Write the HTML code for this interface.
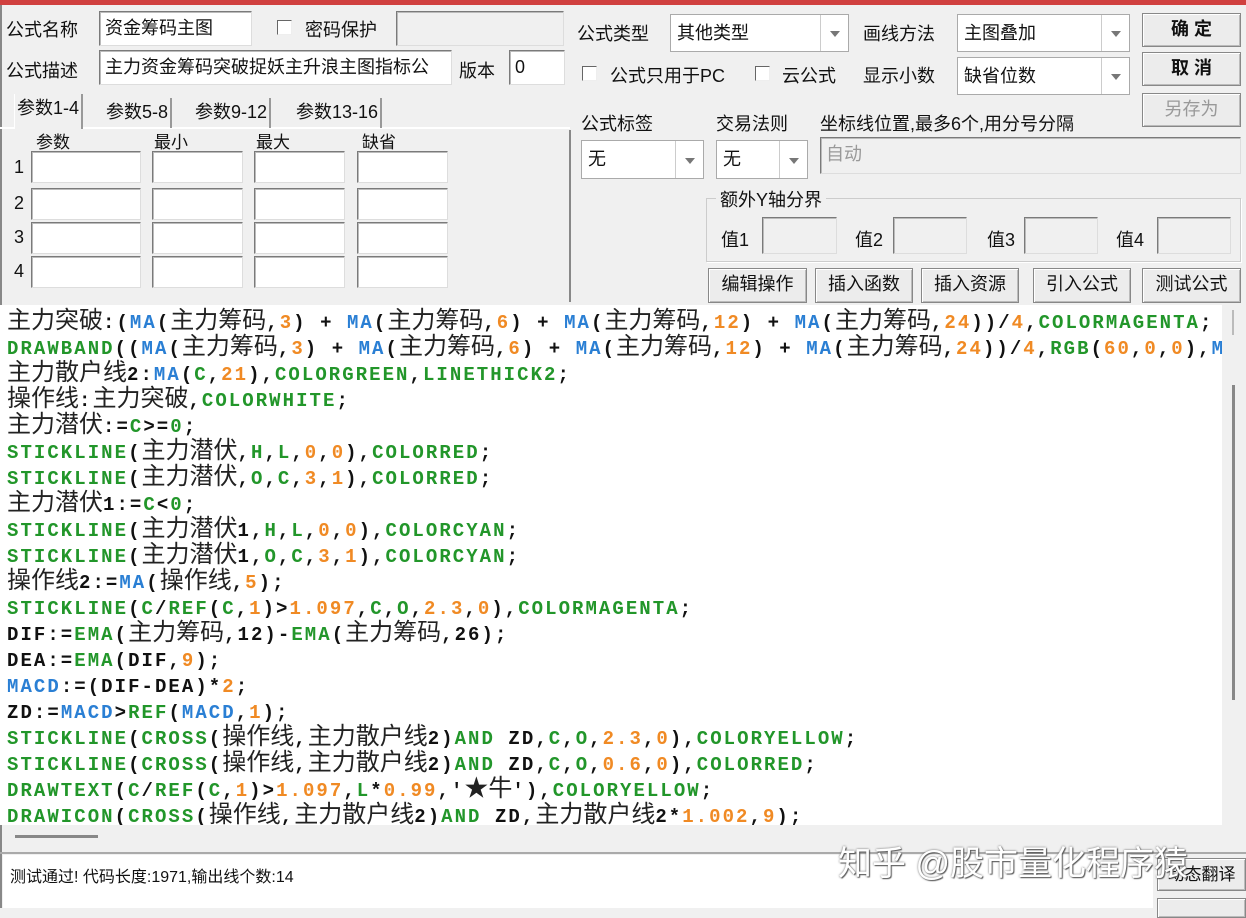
<!DOCTYPE html>
<html><head><meta charset="utf-8"><style>
*{box-sizing:border-box;margin:0;padding:0}
body{width:1246px;height:908px;background:#f0f0f0;position:relative;overflow:hidden;font-family:"Liberation Sans","Noto Sans CJK SC",sans-serif;font-size:18px;color:#111}
.a{position:absolute;white-space:nowrap}
.in{position:absolute;background:#fff;border:1px solid #7a7a7a;border-right-color:#ddd;border-bottom-color:#ddd;box-shadow:inset 1px 1px 0 #bbb;font-size:18px;padding:4px 5px;white-space:nowrap;overflow:hidden;line-height:24px}
.gi{background:#f0f0f0}
.cb{position:absolute;width:15px;height:15px;background:#fff;border:1px solid #666;border-right-color:#eee;border-bottom-color:#eee}
.cmb{position:absolute;background:#fff;border:1px solid #aaa;font-size:18px;padding:6px 6px;line-height:24px}
.cmb .dd{position:absolute;right:0;top:0;bottom:0;width:28px;border-left:1px solid #ccc}
.cmb .dd:after{content:"";position:absolute;left:9px;top:50%;margin-top:-2px;border:5px solid transparent;border-top:6px solid #777}
.btn{position:absolute;background:#ececec;border:1px solid #888;box-shadow:inset 1px 1px 0 #fff,inset -1px -1px 0 #bbb;text-align:center;font-size:18px;line-height:31px}
.tab{position:absolute;top:98px;height:30px;font-size:18px;line-height:28px;padding:0 2px;border-right:2px solid #999}
#code{position:absolute;left:0;top:305px;width:1222px;height:520px;background:#fff;overflow:hidden;padding:5px 0 0 7px;font-family:"Liberation Mono",monospace;font-weight:bold;font-size:19px;letter-spacing:2.05px;line-height:26px;white-space:pre;color:#111}
#code i{font-style:normal;font-family:"Noto Sans CJK SC",sans-serif;font-weight:normal;font-size:24px;letter-spacing:0;color:#222;line-height:0}
.g{color:#22962a}.b{color:#2a7fd4}.o{color:#f08a24}
</style></head><body>
<div class="a" style="left:0;top:0;width:1246px;height:5px;background:#d0403f"></div>
<div class="a" style="left:0;top:5px;width:2px;height:903px;background:#888"></div>

<div class="a" style="left:6px;top:16px">公式名称</div>
<div class="in" style="left:99px;top:11px;width:153px;height:35px">资金筹码主图</div>
<div class="cb" style="left:277px;top:20px"></div>
<div class="a" style="left:305px;top:16px">密码保护</div>
<div class="in gi" style="left:396px;top:11px;width:168px;height:35px"></div>

<div class="a" style="left:6px;top:57px">公式描述</div>
<div class="in" style="left:99px;top:50px;width:353px;height:35px">主力资金筹码突破捉妖主升浪主图指标公</div>
<div class="a" style="left:459px;top:57px">版本</div>
<div class="in" style="left:509px;top:50px;width:56px;height:35px">0</div>

<div class="a" style="left:0;top:127px;width:570px;height:2px;background:#fff"></div>
<div class="a" style="left:569px;top:130px;width:2px;height:172px;background:#888"></div>
<div class="tab" style="left:14px;top:94px;height:35px;background:#f0f0f0;border-left:1px solid #fff">参数1-4</div>
<div class="tab" style="left:104px">参数5-8</div>
<div class="tab" style="left:193px">参数9-12</div>
<div class="tab" style="left:294px">参数13-16</div>
<div class="a" style="left:36px;top:128px;font-size:17px">参数</div>
<div class="a" style="left:154px;top:128px;font-size:17px">最小</div>
<div class="a" style="left:256px;top:128px;font-size:17px">最大</div>
<div class="a" style="left:362px;top:128px;font-size:17px">缺省</div>
<div class="a" style="left:14px;top:157px">1</div>
<div class="a" style="left:14px;top:193px">2</div>
<div class="a" style="left:14px;top:227px">3</div>
<div class="a" style="left:14px;top:261px">4</div>
<div class="in" style="left:31px;top:151px;width:110px;height:32px"></div><div class="in" style="left:152px;top:151px;width:91px;height:32px"></div><div class="in" style="left:254px;top:151px;width:91px;height:32px"></div><div class="in" style="left:357px;top:151px;width:91px;height:32px"></div>
<div class="in" style="left:31px;top:188px;width:110px;height:32px"></div><div class="in" style="left:152px;top:188px;width:91px;height:32px"></div><div class="in" style="left:254px;top:188px;width:91px;height:32px"></div><div class="in" style="left:357px;top:188px;width:91px;height:32px"></div>
<div class="in" style="left:31px;top:222px;width:110px;height:32px"></div><div class="in" style="left:152px;top:222px;width:91px;height:32px"></div><div class="in" style="left:254px;top:222px;width:91px;height:32px"></div><div class="in" style="left:357px;top:222px;width:91px;height:32px"></div>
<div class="in" style="left:31px;top:256px;width:110px;height:32px"></div><div class="in" style="left:152px;top:256px;width:91px;height:32px"></div><div class="in" style="left:254px;top:256px;width:91px;height:32px"></div><div class="in" style="left:357px;top:256px;width:91px;height:32px"></div>

<div class="a" style="left:577px;top:20px">公式类型</div>
<div class="cmb" style="left:670px;top:14px;width:179px;height:38px">其他类型<div class="dd"></div></div>
<div class="a" style="left:863px;top:20px">画线方法</div>
<div class="cmb" style="left:957px;top:14px;width:173px;height:38px">主图叠加<div class="dd"></div></div>
<div class="cb" style="left:582px;top:66px"></div>
<div class="a" style="left:610px;top:62px">公式只用于PC</div>
<div class="cb" style="left:755px;top:66px"></div>
<div class="a" style="left:782px;top:62px">云公式</div>
<div class="a" style="left:863px;top:62px">显示小数</div>
<div class="cmb" style="left:957px;top:57px;width:173px;height:38px">缺省位数<div class="dd"></div></div>

<div class="btn" style="left:1142px;top:13px;width:99px;height:34px;font-weight:bold">确 定</div>
<div class="btn" style="left:1142px;top:52px;width:99px;height:34px;font-weight:bold">取 消</div>
<div class="btn" style="left:1142px;top:93px;width:99px;height:34px;color:#999">另存为</div>

<div class="a" style="left:581px;top:110px">公式标签</div>
<div class="a" style="left:716px;top:110px">交易法则</div>
<div class="a" style="left:820px;top:110px">坐标线位置,最多6个,用分号分隔</div>
<div class="cmb" style="left:581px;top:140px;width:123px;height:39px">无<div class="dd"></div></div>
<div class="cmb" style="left:716px;top:140px;width:92px;height:39px">无<div class="dd"></div></div>
<div class="in gi" style="left:820px;top:137px;width:421px;height:37px;color:#999">自动</div>

<div class="a" style="left:706px;top:198px;width:535px;height:64px;border:1px solid #ccc;box-shadow:1px 1px 0 #fff"></div>
<div class="a" style="left:716px;top:186px;background:#f0f0f0;padding:0 4px">额外Y轴分界</div>
<div class="a" style="left:721px;top:226px">值1</div><div class="in gi" style="left:762px;top:217px;width:75px;height:37px"></div>
<div class="a" style="left:855px;top:226px">值2</div><div class="in gi" style="left:893px;top:217px;width:74px;height:37px"></div>
<div class="a" style="left:987px;top:226px">值3</div><div class="in gi" style="left:1024px;top:217px;width:74px;height:37px"></div>
<div class="a" style="left:1116px;top:226px">值4</div><div class="in gi" style="left:1157px;top:217px;width:74px;height:37px"></div>

<div class="btn" style="left:708px;top:268px;width:99px;height:35px">编辑操作</div>
<div class="btn" style="left:815px;top:268px;width:98px;height:35px">插入函数</div>
<div class="btn" style="left:921px;top:268px;width:98px;height:35px">插入资源</div>
<div class="btn" style="left:1033px;top:268px;width:98px;height:35px">引入公式</div>
<div class="btn" style="left:1142px;top:268px;width:99px;height:35px">测试公式</div>

<div id="code"><i>主力突破</i>:(<span class="b">MA</span>(<i>主力筹码</i>,<span class="o">3</span>) + <span class="b">MA</span>(<i>主力筹码</i>,<span class="o">6</span>) + <span class="b">MA</span>(<i>主力筹码</i>,<span class="o">12</span>) + <span class="b">MA</span>(<i>主力筹码</i>,<span class="o">24</span>))/<span class="o">4</span>,<span class="g">COLORMAGENTA</span>;
<span class="g">DRAWBAND</span>((<span class="b">MA</span>(<i>主力筹码</i>,<span class="o">3</span>) + <span class="b">MA</span>(<i>主力筹码</i>,<span class="o">6</span>) + <span class="b">MA</span>(<i>主力筹码</i>,<span class="o">12</span>) + <span class="b">MA</span>(<i>主力筹码</i>,<span class="o">24</span>))/<span class="o">4</span>,<span class="g">RGB</span>(<span class="o">60</span>,<span class="o">0</span>,<span class="o">0</span>),<span class="b">MA</span>
<i>主力散户线</i>2:<span class="b">MA</span>(<span class="g">C</span>,<span class="o">21</span>),<span class="g">COLORGREEN</span>,<span class="g">LINETHICK2</span>;
<i>操作线</i>:<i>主力突破</i>,<span class="g">COLORWHITE</span>;
<i>主力潜伏</i>:=<span class="g">C</span>&gt;=<span class="g">0</span>;
<span class="g">STICKLINE</span>(<i>主力潜伏</i>,<span class="g">H</span>,<span class="g">L</span>,<span class="o">0</span>,<span class="o">0</span>),<span class="g">COLORRED</span>;
<span class="g">STICKLINE</span>(<i>主力潜伏</i>,<span class="g">O</span>,<span class="g">C</span>,<span class="o">3</span>,<span class="o">1</span>),<span class="g">COLORRED</span>;
<i>主力潜伏</i>1:=<span class="g">C</span>&lt;<span class="g">0</span>;
<span class="g">STICKLINE</span>(<i>主力潜伏</i>1,<span class="g">H</span>,<span class="g">L</span>,<span class="o">0</span>,<span class="o">0</span>),<span class="g">COLORCYAN</span>;
<span class="g">STICKLINE</span>(<i>主力潜伏</i>1,<span class="g">O</span>,<span class="g">C</span>,<span class="o">3</span>,<span class="o">1</span>),<span class="g">COLORCYAN</span>;
<i>操作线</i>2:=<span class="b">MA</span>(<i>操作线</i>,<span class="o">5</span>);
<span class="g">STICKLINE</span>(<span class="g">C</span>/<span class="g">REF</span>(<span class="g">C</span>,<span class="o">1</span>)&gt;<span class="o">1.097</span>,<span class="g">C</span>,<span class="g">O</span>,<span class="o">2.3</span>,<span class="o">0</span>),<span class="g">COLORMAGENTA</span>;
DIF:=<span class="g">EMA</span>(<i>主力筹码</i>,12)-<span class="g">EMA</span>(<i>主力筹码</i>,26);
DEA:=<span class="g">EMA</span>(DIF,<span class="o">9</span>);
<span class="b">MACD</span>:=(DIF-DEA)*<span class="o">2</span>;
ZD:=<span class="b">MACD</span>&gt;<span class="g">REF</span>(<span class="b">MACD</span>,<span class="o">1</span>);
<span class="g">STICKLINE</span>(<span class="g">CROSS</span>(<i>操作线</i>,<i>主力散户线</i>2)<span class="g">AND</span> ZD,<span class="g">C</span>,<span class="g">O</span>,<span class="o">2.3</span>,<span class="o">0</span>),<span class="g">COLORYELLOW</span>;
<span class="g">STICKLINE</span>(<span class="g">CROSS</span>(<i>操作线</i>,<i>主力散户线</i>2)<span class="g">AND</span> ZD,<span class="g">C</span>,<span class="g">O</span>,<span class="o">0.6</span>,<span class="o">0</span>),<span class="g">COLORRED</span>;
<span class="g">DRAWTEXT</span>(<span class="g">C</span>/<span class="g">REF</span>(<span class="g">C</span>,<span class="o">1</span>)&gt;<span class="o">1.097</span>,<span class="g">L</span>*<span class="o">0.99</span>,'<i>★牛</i>'),<span class="g">COLORYELLOW</span>;
<span class="g">DRAWICON</span>(<span class="g">CROSS</span>(<i>操作线</i>,<i>主力散户线</i>2)<span class="g">AND</span> ZD,<i>主力散户线</i>2*<span class="o">1.002</span>,<span class="o">9</span>);</div>

<div class="a" style="left:1222px;top:305px;width:24px;height:545px;background:#f0f0f0"></div>
<div class="a" style="left:1232px;top:385px;width:3px;height:315px;background:#888"></div>
<div class="a" style="left:1232px;top:310px;width:2px;height:25px;background:#bbb"></div>
<div class="a" style="left:15px;top:835px;width:83px;height:3px;background:#888"></div>
<div class="a" style="left:0;top:852px;width:1246px;height:2px;background:#aaa"></div>
<div class="a" style="left:3px;top:855px;width:1150px;height:53px;background:#fff"></div>
<div class="a" style="left:10px;top:863px;font-size:16px">测试通过! 代码长度:1971,输出线个数:14</div>
<div class="btn" style="left:1157px;top:858px;width:89px;height:33px;font-size:17px">动态翻译</div>
<div class="btn" style="left:1157px;top:898px;width:89px;height:20px"></div>
<div class="a" style="left:838px;top:836px;font-size:34px;color:#fff;text-shadow:0 0 2px #666,1px 1px 1px #555">知乎 @股市量化程序猿</div>
</body></html>
